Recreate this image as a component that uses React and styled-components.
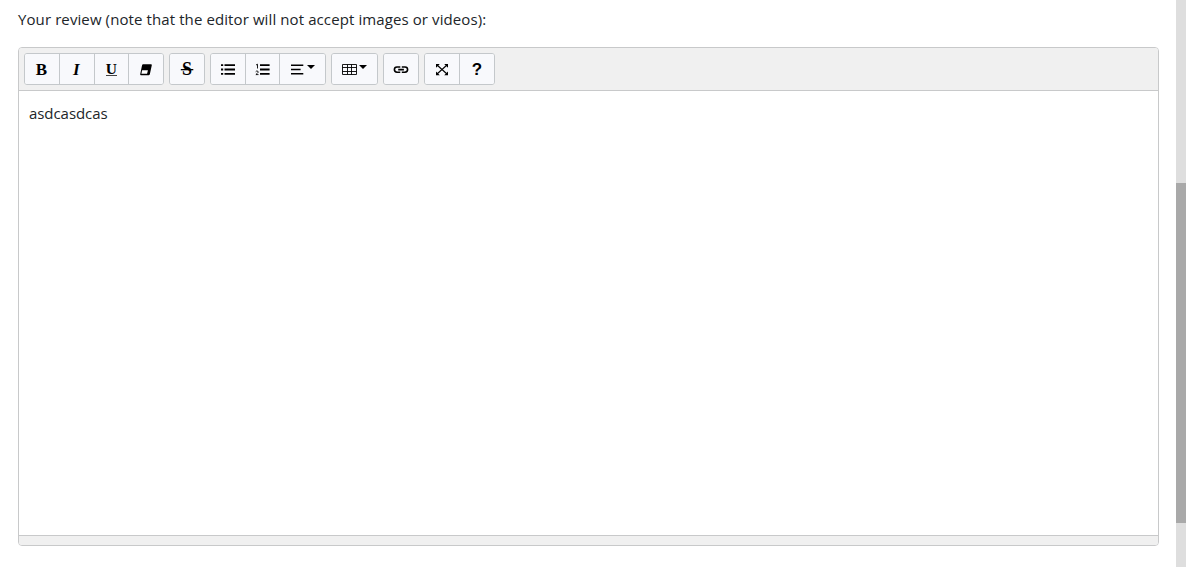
import React from "react";
import styled, { createGlobalStyle } from "styled-components";

const Global = createGlobalStyle`
  * { box-sizing: border-box; }
  body { margin: 0; background: #fff; overflow: hidden; }
`;

const Page = styled.div`
  display: flex;
  height: 567px;
  padding-right: 13px;
  font-family: "Open Sans", "Noto Sans", sans-serif;
  font-size: 15px;
  line-height: 24px;
  color: #212529;
`;

const Content = styled.main`
  flex: 1;
  padding: 7px 17px 0 18px;
`;

const Label = styled.label`
  display: block;
  height: 40px;
  letter-spacing: 0.1px;
  white-space: nowrap;
`;

const Editor = styled.section`
  display: flex;
  flex-direction: column;
  height: 499px;
  border: 1px solid #c8c9ca;
  border-radius: 4px;
  overflow: hidden;
`;

const Toolbar = styled.div`
  display: flex;
  gap: 5px;
  height: 43px;
  padding: 5px;
  background: #f0f0f0;
  border-bottom: 1px solid #c8c9ca;
`;

const Group = styled.div`
  display: flex;
  height: 32px;
  border: 1px solid #c4c8cb;
  border-radius: 3px;
  background: #f8f9fa;
  overflow: hidden;
`;

const Button = styled.button`
  box-sizing: content-box;
  display: flex;
  align-items: center;
  width: ${(p) => (p.$width || 34) - 9}px;
  height: 30px;
  padding: 0 0 0 9px;
  border: 0 solid #c4c8cb;
  background: #f8f9fc;
  color: #000;
  &:not(:first-child) {
    border-left-width: 1px;
  }
`;

const Icon = styled.svg`
  display: block;
  flex: none;
  width: 16px;
  height: 16px;
  overflow: visible;
  fill: currentColor;
`;

const Caret = styled.span`
  margin: -4px 0 0 2px;
  border: 4px solid transparent;
  border-top-color: currentColor;
  border-bottom: 0;
`;

const Body = styled.div`
  flex: 1;
  padding: 10px;
  color: #212529;
  letter-spacing: -0.06px;
`;

const StatusBar = styled.div`
  height: 10px;
  background: #f0f0f0;
  border-top: 1px solid #c8c9ca;
`;

const Scrollbar = styled.div`
  width: 10px;
  padding-top: 183px;
  background: #dedede;
`;

const Thumb = styled.div`
  height: 340px;
  background: #a9a9a9;
`;

const serif = '"Liberation Serif", serif';

function Glyph({ children, size, y = 14, ...rest }) {
  return (
    <text x="8" y={y} textAnchor="middle" fontFamily={serif} fontWeight="700" fontSize={size} {...rest}>
      {children}
    </text>
  );
}

export default function App() {
  return (
    <Page>
      <Global />
      <Content>
        <Label>Your review (note that the editor will not accept images or videos):</Label>
        <Editor>
          <Toolbar>
            <Group>
              <Button aria-label="Bold">
                <Icon><Glyph size="17" x="7.5">B</Glyph></Icon>
              </Button>
              <Button aria-label="Italic">
                <Icon><Glyph size="17" x="7.3" fontStyle="italic">I</Glyph></Icon>
              </Button>
              <Button aria-label="Underline" $width={33}>
                <Icon>
                  <Glyph size="15.5" x="7.3" y="13">U</Glyph>
                  <rect x="2" y="14" width="11" height="1" fill="#444" />
                </Icon>
              </Button>
              <Button aria-label="Remove font style">
                <Icon>
                  <path d="M5.2 3.2H13q1 0 .8 1L11.9 13q-.3 1.2-1.3 1.2H3q-1 0-.8-1L4 4.4q.2-1.2 1.2-1.2Z" />
                  <path d="M4.1 9.2h5.8l-.8 3.6H3.4Z" fill="#fff" />
                </Icon>
              </Button>
            </Group>
            <Group>
              <Button aria-label="Strikethrough">
                <Icon>
                  <Glyph size="18" y="14.3" fontWeight="700">S</Glyph>
                  <rect x="1.8" y="8" width="12.5" height="1.3" />
                </Icon>
              </Button>
            </Group>
            <Group>
              <Button aria-label="Unordered list">
                <Icon>
                  <path d="M1 3.2h2.2V5H1zM1 7.6h2.2v1.8H1zM1 12h2.2v1.8H1zM4.5 3.2H15V5H4.5zM4.5 7.6H15v1.8H4.5zM4.5 12H15v1.8H4.5z" />
                </Icon>
              </Button>
              <Button aria-label="Ordered list" $width={33}>
                <Icon>
                  <path d="M5 3.2h9.6V5H5zM5 7.6h9.6v1.8H5zM5 12h9.6v1.8H5z" />
                  <path d="M1 4l1.5-.8V7.5M.7 10.7q.4-.7 1.3-.7 1.2 0 1.2 1 0 .6-1 1.4L.9 13.6h2.6" fill="none" stroke="currentColor" strokeWidth=".9" />
                </Icon>
              </Button>
              <Button aria-label="Paragraph" $width={45}>
                <Icon>
                  <path d="M2 3.4h12.3v1.6H2zM2 7.7h9.6v1.6H2zM2 12h12.3v1.6H2z" />
                </Icon>
                <Caret />
              </Button>
            </Group>
            <Group>
              <Button aria-label="Table" $width={45}>
                <Icon>
                  <path d="M1.5 3.5h14v10h-14zM6.5 3.5v10M10.5 3.5v10M1.5 6.5h14M1.5 10.5h14" fill="none" stroke="currentColor" strokeWidth=".9" />
                </Icon>
                <Caret />
              </Button>
            </Group>
            <Group>
              <Button aria-label="Link">
                <Icon>
                  <path d="M7.3 6H4A2.6 2.6 0 0 0 4 11.2H7.3M8.8 6H12A2.6 2.6 0 0 1 12 11.2H8.8M5.2 8.6h5.7" fill="none" stroke="currentColor" strokeWidth="1.6" />
                </Icon>
              </Button>
            </Group>
            <Group>
              <Button aria-label="Full screen">
                <Icon>
                  <path d="M3 4l10 9M13 4L3 13" fill="none" stroke="currentColor" strokeWidth="1.1" />
                  <path d="M2 3h3.8L2 6.8zM14 3v3.8L10.2 3zM2 14.2v-3.8l3.8 3.8zM14 14.2h-3.8l3.8-3.8z" />
                </Icon>
              </Button>
              <Button aria-label="Help">
                <Icon>
                  <Glyph size="17" y="14" fontFamily='"Liberation Sans", sans-serif'>?</Glyph>
                </Icon>
              </Button>
            </Group>
          </Toolbar>
          <Body>asdcasdcas</Body>
          <StatusBar />
        </Editor>
      </Content>
      <Scrollbar><Thumb /></Scrollbar>
    </Page>
  );
}
